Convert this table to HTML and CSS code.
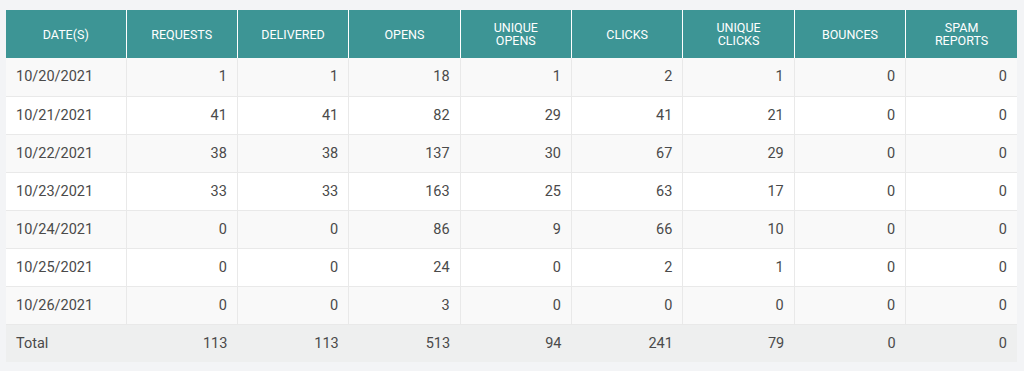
FILE: index.html
```html
<!DOCTYPE html>
<html>
<head>
<meta charset="utf-8">
<link rel="stylesheet" href="styles.css">
</head>
<body>
<div class="wrap">
<table class="stats">
<colgroup>
<col class="c-date"><col><col><col><col><col><col><col><col>
</colgroup>
<thead>
<tr>
<th>DATE(S)</th><th>REQUESTS</th><th>DELIVERED</th><th>OPENS</th><th>UNIQUE<br>OPENS</th><th>CLICKS</th><th>UNIQUE<br>CLICKS</th><th>BOUNCES</th><th>SPAM<br>REPORTS</th>
</tr>
</thead>
<tbody>
<tr><td>10/20/2021</td><td>1</td><td>1</td><td>18</td><td>1</td><td>2</td><td>1</td><td>0</td><td>0</td></tr>
<tr><td>10/21/2021</td><td>41</td><td>41</td><td>82</td><td>29</td><td>41</td><td>21</td><td>0</td><td>0</td></tr>
<tr><td>10/22/2021</td><td>38</td><td>38</td><td>137</td><td>30</td><td>67</td><td>29</td><td>0</td><td>0</td></tr>
<tr><td>10/23/2021</td><td>33</td><td>33</td><td>163</td><td>25</td><td>63</td><td>17</td><td>0</td><td>0</td></tr>
<tr><td>10/24/2021</td><td>0</td><td>0</td><td>86</td><td>9</td><td>66</td><td>10</td><td>0</td><td>0</td></tr>
<tr><td>10/25/2021</td><td>0</td><td>0</td><td>24</td><td>0</td><td>2</td><td>1</td><td>0</td><td>0</td></tr>
<tr><td>10/26/2021</td><td>0</td><td>0</td><td>3</td><td>0</td><td>0</td><td>0</td><td>0</td><td>0</td></tr>
</tbody>
<tfoot>
<tr><td>Total</td><td>113</td><td>113</td><td>513</td><td>94</td><td>241</td><td>79</td><td>0</td><td>0</td></tr>
</tfoot>
</table>
</div>
</body>
</html>
```
FILE: styles.css
```css
html, body {
  margin: 0;
  background: #f3f4f6;
}
.wrap {
  padding: 10px 7px 9px 6px;
}
.stats {
  width: 1011px;
  border-collapse: collapse;
  table-layout: fixed;
  font-family: Roboto, "Liberation Sans", sans-serif;
}
.c-date {
  width: 120px;
}
.stats th {
  background: #3d9595;
  color: #ffffff;
  font-size: 12.5px;
  font-weight: 400;
  line-height: 13px;
  height: 48px;
  padding: 0 6px;
  text-align: center;
  border-right: 1px solid #ffffff;
  box-sizing: border-box;
}
.stats th:last-child {
  border-right: none;
}
.stats td {
  font-size: 14.5px;
  color: #4a4a4a;
  height: 38px;
  padding: 0 10px;
  text-align: right;
  border-right: 1px solid #e9e9e9;
  border-bottom: 1px solid #e9e9e9;
  box-sizing: border-box;
}
.stats td:first-child {
  text-align: left;
}
.stats td:last-child {
  border-right: none;
}
.stats tbody tr:nth-child(odd) td {
  background: #f9f9f9;
}
.stats tbody tr:nth-child(even) td {
  background: #ffffff;
}
.stats tfoot td {
  background: #eeefef;
  border-right: none;
  border-bottom: none;
}
```
